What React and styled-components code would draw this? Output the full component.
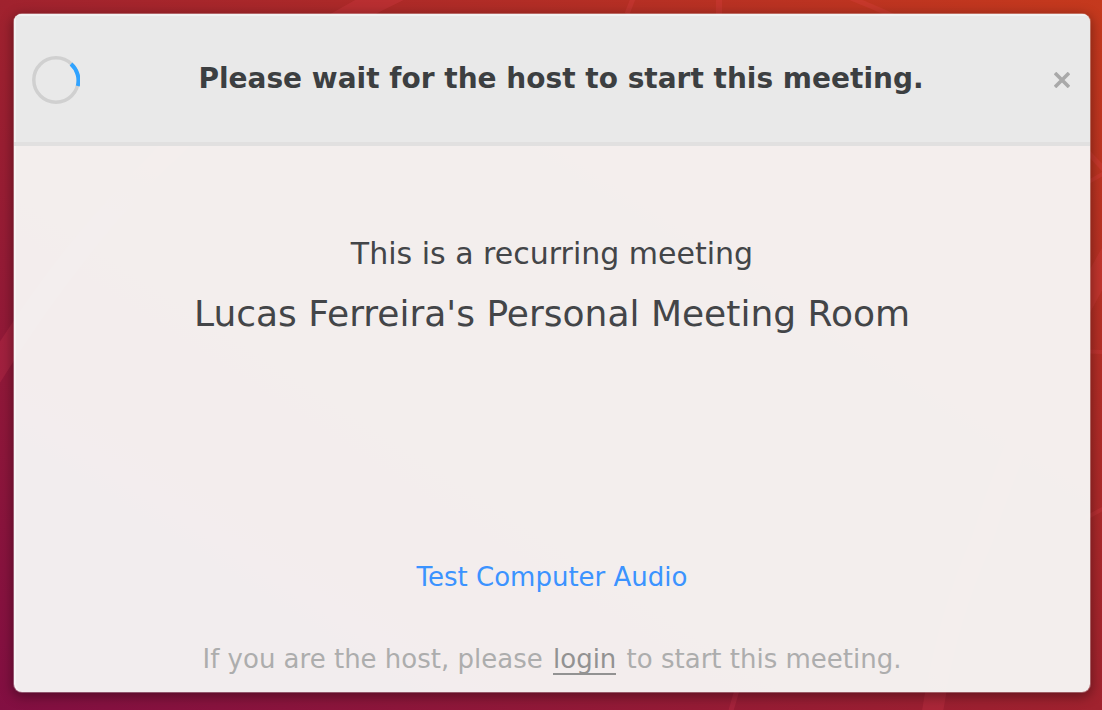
import React from "react";
import styled, { createGlobalStyle } from "styled-components";

const GlobalStyle = createGlobalStyle`
  * { box-sizing: border-box; }
  body { margin: 0; font-family: "DejaVu Sans", sans-serif; color: #434548; }
`;

const Desktop = styled.main`
  position: relative;
  display: flex;
  min-height: 100vh;
  padding: 14px 12px 18px 14px;
  background: linear-gradient(to top right, #820f42 0%, #a0222e 50%, #c5391d 100%);
`;

const Wallpaper = styled.svg`
  position: absolute;
  inset: 0;
  width: 100%;
  height: 100%;
  fill: none;
  stroke: rgba(255, 80, 100, 0.15);
`;

const Dialog = styled.section`
  position: relative;
  flex: 1;
  display: flex;
  flex-direction: column;
  border-radius: 8px;
  overflow: hidden;
  background: rgba(246, 245, 244, 0.97);
  box-shadow: 0 0 0 1px rgba(255, 255, 255, 0.3), 0 3px 12px 2px rgba(0, 0, 0, 0.35),
    inset 2px 0 rgba(255, 255, 255, 0.4);
`;

const Header = styled.header`
  display: flex;
  align-items: center;
  height: 132px;
  padding: 4px 20px 0 18px;
  background: #e9e9e9;
  border-bottom: 4px solid #e1e0e0;
  box-shadow: inset 2px 2px #f2f2f2;
`;

const Spinner = styled.svg`
  width: 48px;
  height: 48px;
  fill: none;
  stroke-width: 4;
`;

const Title = styled.h1`
  flex: 1;
  margin: 0;
  padding: 0 12px 2px 0;
  font-size: 28px;
  line-height: 36px;
  text-align: center;
  color: #3c3f41;
`;

const CloseButton = styled.button`
  display: flex;
  padding: 0;
  border: 0;
  background: none;
  color: #a9a9a9;
`;

const Body = styled.div`
  flex: 1;
  display: flex;
  flex-direction: column;
  align-items: center;
  padding: 88px 18px 15px;
  text-align: center;
`;

const Kind = styled.p`
  margin: 0;
  font-size: 30px;
  line-height: 40px;
`;

const Room = styled.h2`
  margin: 18px 0 auto;
  font-size: 36px;
  font-weight: 400;
  line-height: 44px;
`;

const AudioButton = styled.button`
  padding: 0;
  border: 0;
  background: none;
  font: inherit;
  font-size: 26px;
  line-height: 36px;
  color: #3b93ff;
`;

const HostNote = styled.p`
  margin: 46px 0 0;
  font-size: 26px;
  line-height: 36px;
  color: #adadad;
`;

const LoginLink = styled.a`
  display: inline-block;
  margin: 0 2px;
  border-bottom: 2px solid #929292;
  line-height: 28px;
  color: #929292;
  text-decoration: none;
`;

export default function App() {
  return (
    <Desktop>
      <GlobalStyle />
      <Wallpaper viewBox="0 0 1102 710" preserveAspectRatio="xMidYMid slice" aria-hidden="true">
        <path d="M399 -10Q156 106 -10 378" strokeWidth="22" />
        <path d="M1116 245Q1030 390 982 540Q946 620 932 715" strokeWidth="21" />
        <path d="M634 -4L627 14M737 690L730 714" strokeWidth="5" />
        <path d="M719 0V14" strokeWidth="6" />
        <path d="M846 -4Q1010 60 1106 172" strokeWidth="5" />
        <path d="M1106 172Q1000 230 960 310" strokeWidth="4" />
        <path d="M985 332Q1040 352 1102 352M1086 518L1106 507" strokeWidth="4" />
      </Wallpaper>
      <Dialog aria-labelledby="dialog-title">
        <Header>
          <Spinner viewBox="0 0 48 48" role="img" aria-label="Waiting">
            <circle cx="24" cy="24" r="22.2" stroke="#d0d0d0" strokeWidth="3.5" />
            <path d="M39 8A22 22 0 0 1 45.8 30" stroke="#30a3ff" />
          </Spinner>
          <Title id="dialog-title">Please wait for the host to start this meeting.</Title>
          <CloseButton aria-label="Close">
            <svg width="16" height="16" viewBox="0 0 16 16" stroke="currentColor" strokeWidth="3.6">
              <path d="M1 1L15 15M15 1L1 15" />
            </svg>
          </CloseButton>
        </Header>
        <Body>
          <Kind>This is a recurring meeting</Kind>
          <Room>Lucas Ferreira's Personal Meeting Room</Room>
          <AudioButton>Test Computer Audio</AudioButton>
          <HostNote>
            If you are the host, please <LoginLink href="#login">login</LoginLink> to start this meeting.
          </HostNote>
        </Body>
      </Dialog>
    </Desktop>
  );
}
